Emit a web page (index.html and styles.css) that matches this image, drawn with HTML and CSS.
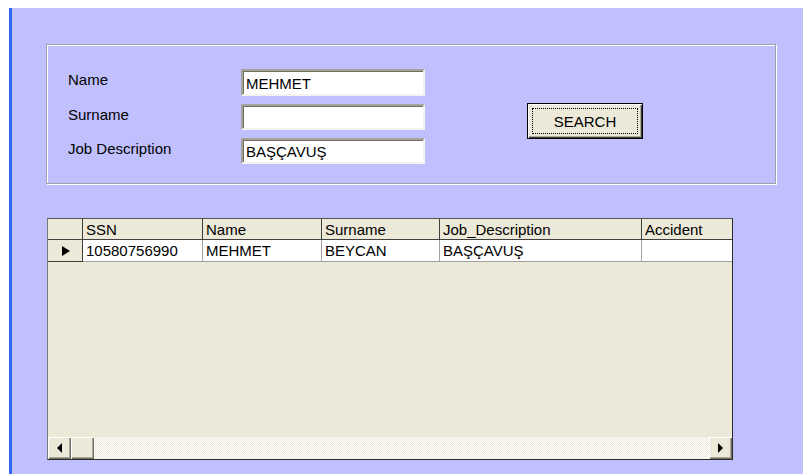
FILE: index.html
```html
<!DOCTYPE html>
<html lang="tr">
<head>
<meta charset="utf-8">
<title>Personnel Search</title>
<link rel="stylesheet" href="styles.css">
</head>
<body>
<div class="frame">
  <div class="panel">
    <div class="group">
      <div class="form">
        <label class="lbl" for="f-name">Name</label>
        <input class="field" id="f-name" type="text" value="MEHMET">
        <label class="lbl" for="f-surname">Surname</label>
        <input class="field" id="f-surname" type="text" value="">
        <label class="lbl" for="f-job">Job Description</label>
        <input class="field" id="f-job" type="text" value="BAŞÇAVUŞ">
      </div>
      <button class="btn" type="button">SEARCH</button>
    </div>

    <div class="grid">
      <div class="rows">
        <div class="cell hd ind"></div>
        <div class="cell hd">SSN</div>
        <div class="cell hd">Name</div>
        <div class="cell hd">Surname</div>
        <div class="cell hd">Job_Description</div>
        <div class="cell hd last">Accident</div>

        <div class="cell ind cur"><span class="tri"></span></div>
        <div class="cell dt">10580756990</div>
        <div class="cell dt">MEHMET</div>
        <div class="cell dt">BEYCAN</div>
        <div class="cell dt">BAŞÇAVUŞ</div>
        <div class="cell dt last"></div>
      </div>
      <div class="hscroll">
        <div class="sbtn"><span class="arr-l"></span></div>
        <div class="thumb"></div>
        <div class="track"></div>
        <div class="sbtn"><span class="arr-r"></span></div>
      </div>
    </div>
  </div>
</div>
</body>
</html>
```

FILE: styles.css
```css
* { box-sizing: border-box; }

html, body {
  margin: 0;
  padding: 0;
  background: #ffffff;
}

body {
  font-family: "Liberation Sans", Arial, sans-serif;
  font-size: 15px;
  color: #000;
}

.frame {
  padding: 8px 0 0 9px;
  height: 474px;
  overflow: hidden;
}

.panel {
  height: 466px;
  background: #c0c0ff;
  border-left: 3px solid #2f66f4;
  padding: 36px 0 0 34px;
}

/* etched group frame */
.group {
  width: 730px;
  height: 140px;
  border: 1px solid #a0a0a8;
  box-shadow: inset 1px 1px 0 #ffffff, 1px 1px 0 #ffffff;
  display: flex;
  align-items: flex-start;
  padding: 24px 0 0 21px;
}

.form {
  display: grid;
  grid-template-columns: 173px 184px;
  grid-template-rows: 27px 26px 26px;
  row-gap: 8px;
}

.lbl {
  line-height: 17px;
  padding-top: 2px;
  align-self: start;
}

.field {
  width: 184px;
  height: 100%;
  margin: 0;
  font: inherit;
  color: #000;
  background: #ffffff;
  border: 2px solid;
  border-color: #a6a39a #f4f3ee #f4f3ee #a6a39a;
  box-shadow: inset 1px 1px 0 #6f6d64;
  padding: 1px 3px 0 3px;
  outline: none;
}

.btn {
  margin: 34px 0 0 102px;
  width: 116px;
  height: 36px;
  font: inherit;
  color: #000;
  background: #ece9d8;
  border: 1px solid #000;
  box-shadow: inset 1px 1px 0 #ffffff, inset -1px -1px 0 #3f3e39, inset -2px -2px 0 #aca899;
  outline: 1px dotted #000;
  outline-offset: -6px;
  padding: 0;
}

/* data grid */
.grid {
  margin: 34px 0 0 1px;
  width: 686px;
  height: 242px;
  background: #ece9d8;
  border: 1px solid #2b2b2b;
  border-top-color: #555;
  border-left-color: #777;
  box-shadow: inset 0 1px 0 #404040;
  display: flex;
  flex-direction: column;
}

.rows {
  flex: 1;
  display: grid;
  grid-template-columns: 35px 120px 119px 118px 202px 90px;
  grid-template-rows: 21px 22px;
  align-content: start;
}

.cell {
  padding-left: 3px;
  line-height: 20px;
  white-space: nowrap;
  overflow: hidden;
}

.hd {
  background: #ece9d8;
  border-right: 1px solid #404040;
  border-bottom: 1px solid #404040;
  padding-top: 1px;
}

.dt {
  background: #ffffff;
  border-right: 1px solid #a0a0a0;
  border-bottom: 1px solid #a0a0a0;
  line-height: 21px;
}

.last { border-right: none; }

.ind {
  background: #ece9d8;
  border-right: 1px solid #404040;
  border-bottom: 1px solid #404040;
  padding: 0;
}

.cur {
  display: flex;
  align-items: center;
  justify-content: center;
}

.tri {
  width: 0;
  height: 0;
  border-top: 5px solid transparent;
  border-bottom: 5px solid transparent;
  border-left: 8px solid #000;
  margin-left: 1px;
}

/* horizontal scroll bar */
.hscroll {
  height: 22px;
  display: flex;
}

.sbtn,
.thumb {
  width: 23px;
  background: #ece9d8;
  box-shadow: inset 1px 1px 0 #ffffff, inset -1px -1px 0 #716f64, inset -2px -2px 0 #aca899;
  display: flex;
  align-items: center;
  justify-content: center;
}

.track {
  flex: 1;
  background-color: #ffffff;
  background-image: repeating-conic-gradient(#ece9d8 0 25%, #ffffff 0 50%);
  background-size: 2px 2px;
}

.arr-l {
  width: 0;
  height: 0;
  border-top: 5px solid transparent;
  border-bottom: 5px solid transparent;
  border-right: 5px solid #000;
}

.arr-r {
  width: 0;
  height: 0;
  border-top: 5px solid transparent;
  border-bottom: 5px solid transparent;
  border-left: 5px solid #000;
}
```
